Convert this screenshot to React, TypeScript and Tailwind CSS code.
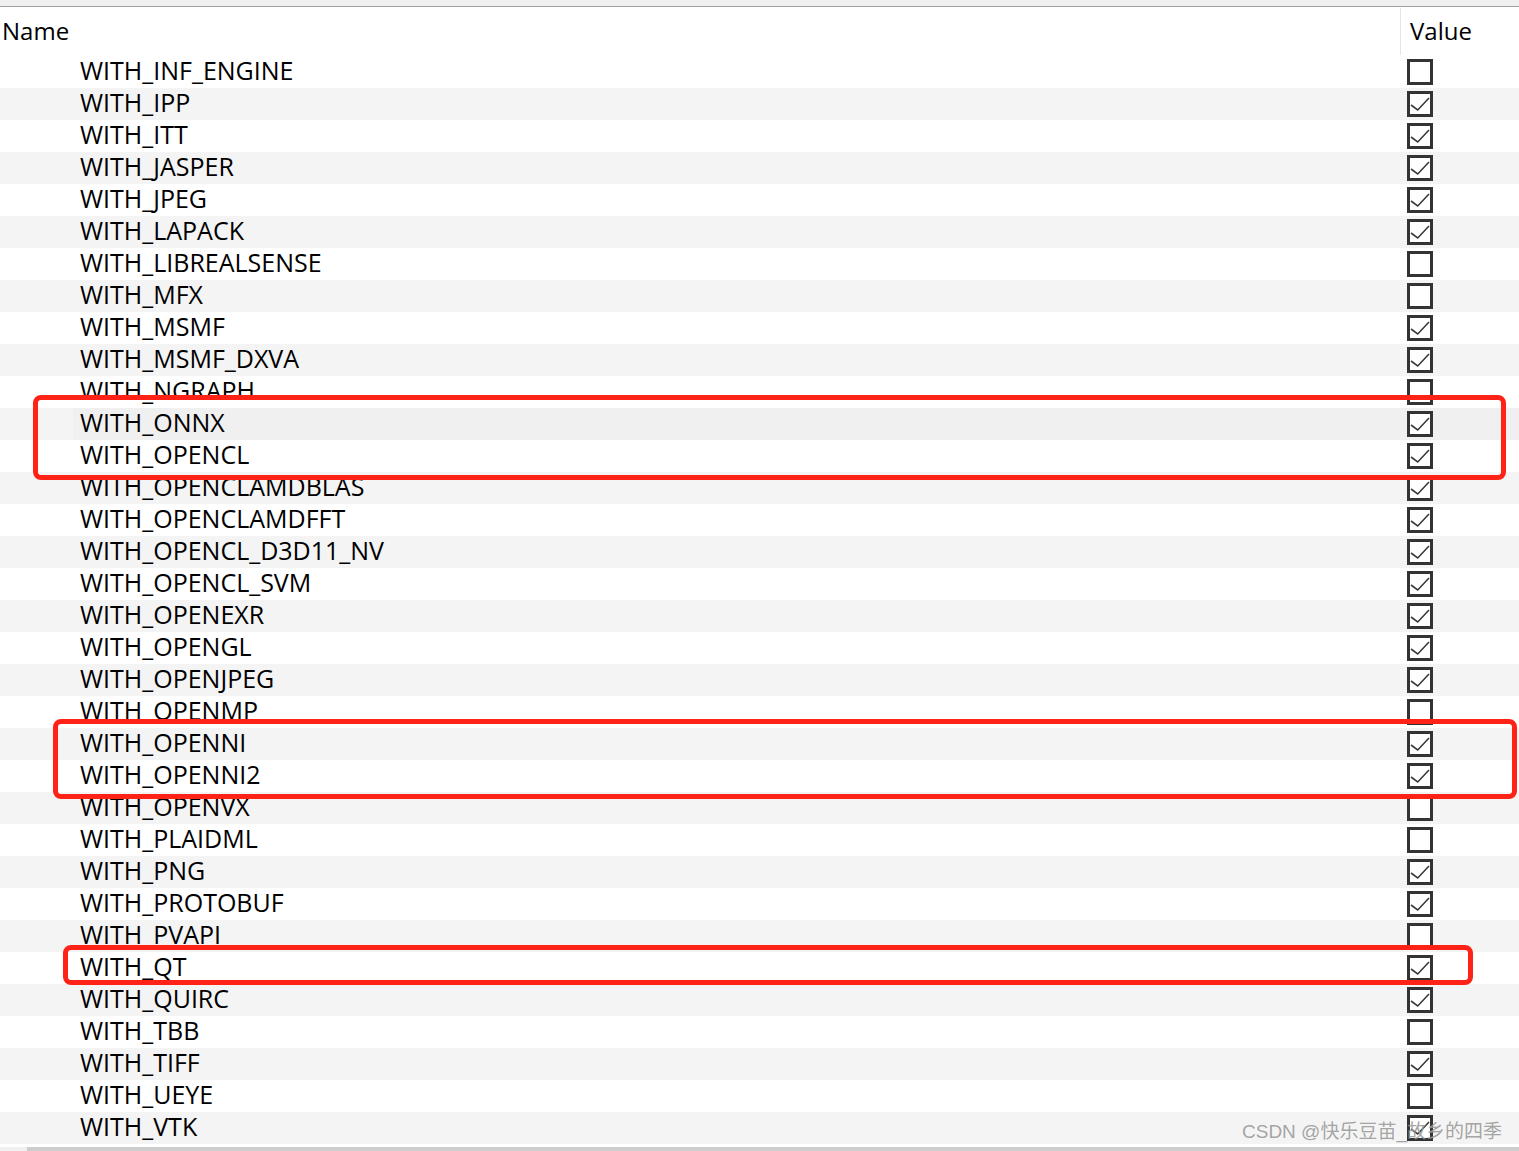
import React from 'react';

type Row = { name: string; on: boolean };

const rows: Row[] = [
  { name: 'WITH_INF_ENGINE', on: false },
  { name: 'WITH_IPP', on: true },
  { name: 'WITH_ITT', on: true },
  { name: 'WITH_JASPER', on: true },
  { name: 'WITH_JPEG', on: true },
  { name: 'WITH_LAPACK', on: true },
  { name: 'WITH_LIBREALSENSE', on: false },
  { name: 'WITH_MFX', on: false },
  { name: 'WITH_MSMF', on: true },
  { name: 'WITH_MSMF_DXVA', on: true },
  { name: 'WITH_NGRAPH', on: false },
  { name: 'WITH_ONNX', on: true },
  { name: 'WITH_OPENCL', on: true },
  { name: 'WITH_OPENCLAMDBLAS', on: true },
  { name: 'WITH_OPENCLAMDFFT', on: true },
  { name: 'WITH_OPENCL_D3D11_NV', on: true },
  { name: 'WITH_OPENCL_SVM', on: true },
  { name: 'WITH_OPENEXR', on: true },
  { name: 'WITH_OPENGL', on: true },
  { name: 'WITH_OPENJPEG', on: true },
  { name: 'WITH_OPENMP', on: false },
  { name: 'WITH_OPENNI', on: true },
  { name: 'WITH_OPENNI2', on: true },
  { name: 'WITH_OPENVX', on: false },
  { name: 'WITH_PLAIDML', on: false },
  { name: 'WITH_PNG', on: true },
  { name: 'WITH_PROTOBUF', on: true },
  { name: 'WITH_PVAPI', on: false },
  { name: 'WITH_QT', on: true },
  { name: 'WITH_QUIRC', on: true },
  { name: 'WITH_TBB', on: false },
  { name: 'WITH_TIFF', on: true },
  { name: 'WITH_UEYE', on: false },
  { name: 'WITH_VTK', on: true },
];

function Box({ on }: { on: boolean }) {
  return (
    <div className="w-[26px] h-[26px] border-[3px] border-[#333333] bg-white">
      {on && (
        <svg width="20" height="20" viewBox="0 0 20 20">
          <path d="M1 11 L7.7 16 L19 4" fill="none" stroke="#3a3a3a" strokeWidth="1.6" />
        </svg>
      )}
    </div>
  );
}

export default function App() {
  return (
    <div className="relative w-[1519px] h-[1151px] overflow-hidden bg-white text-black font-['Open_Sans',sans-serif]">
      <div className="h-[6px] bg-[#f0f0f0]" />
      <div className="h-px bg-[#a0a0a0]" />
      <div className="flex h-[49px] text-[24px]">
        <div className="w-[1400px] pl-[2px] pt-[6px]">Name</div>
        <div className="w-px my-[1px] bg-[#e5e5e5]" />
        <div className="pl-[9px] pt-[6px]">Value</div>
      </div>
      {rows.map((r, i) => (
        <div
          key={r.name}
          className={`flex h-[32px] text-[25px] ${i % 2 === 1 ? 'bg-[#f4f4f4]' : 'bg-white'}`}
        >
          <div className="w-[73px]" />
          <div className={`flex flex-1 items-center pl-[7px] ${r.name === 'WITH_ONNX' ? 'bg-[#f0f0f0]' : ''}`}>
            <div className="w-[1327px] leading-[32px] -mt-[4px]">{r.name}</div>
            <Box on={r.on} />
          </div>
        </div>
      ))}
      <div className="h-[3px] bg-white" />
      <div className="flex h-[4px]">
        <div className="w-[27px] bg-[#f0f0f0]" />
        <div className="flex-1 bg-[#cdcdcd]" />
      </div>

      {/* annotation boxes */}
      <div className="absolute left-[33px] top-[395px] w-[1473px] h-[85px] border-[5px] border-[#ff2317] rounded-[8px]" />
      <div className="absolute left-[53px] top-[719px] w-[1464px] h-[80px] border-[5px] border-[#ff2317] rounded-[8px]" />
      <div className="absolute left-[63px] top-[945px] w-[1410px] h-[40px] border-[5px] border-[#ff2317] rounded-[8px]" />

      <div className="absolute left-[1242px] top-[1118px] text-[19px] text-[#9a9a9a]/90 font-['Liberation_Sans','Noto_Sans_CJK_SC',sans-serif] whitespace-nowrap">
        CSDN @快乐豆苗_故乡的四季
      </div>
    </div>
  );
}
